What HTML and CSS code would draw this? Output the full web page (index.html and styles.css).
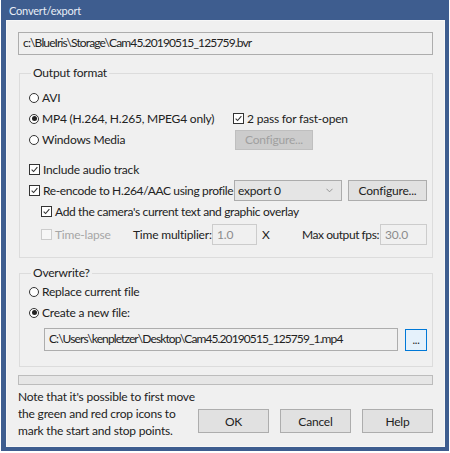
FILE: index.html
```html
<!DOCTYPE html>
<html>
<head>
<meta charset="utf-8">
<link rel="stylesheet" href="styles.css">
</head>
<body>
<div class="frame">
  <div class="titlebar">Convert/export</div>
  <div class="client">
    <div class="pathbox">c:\BlueIris\Storage\Cam45.20190515_125759.bvr</div>

    <fieldset class="group group-output">
      <legend>Output format</legend>
      <div class="row">
        <span class="radio"></span><span class="lbl">AVI</span>
      </div>
      <div class="row">
        <div class="left"><span class="radio on"></span><span class="lbl">MP4 (H.264, H.265, MPEG4 only)</span></div>
        <span class="check on"><svg viewBox="0 0 11 11"><polyline points="2,5.6 4.4,8 9,2.6"/></svg></span><span class="lbl">2 pass for fast-open</span>
      </div>
      <div class="row">
        <div class="left"><span class="radio"></span><span class="lbl">Windows Media</span></div>
        <button class="btn btn-disabled btn-cfg1">Configure...</button>
      </div>
      <div class="row row-gap">
        <span class="check on"><svg viewBox="0 0 11 11"><polyline points="2,5.6 4.4,8 9,2.6"/></svg></span><span class="lbl">Include audio track</span>
      </div>
      <div class="row">
        <div class="left"><span class="check on"><svg viewBox="0 0 11 11"><polyline points="2,5.6 4.4,8 9,2.6"/></svg></span><span class="lbl tight">Re-encode to H.264/AAC using profile</span></div>
        <div class="combo"><span>export 0</span><svg class="chev" viewBox="0 0 8 5"><polyline points="0.5,0.5 4,4 7.5,0.5"/></svg></div>
        <button class="btn btn-cfg2">Configure...</button>
      </div>
      <div class="row indent">
        <span class="check on"><svg viewBox="0 0 11 11"><polyline points="2,5.6 4.4,8 9,2.6"/></svg></span><span class="lbl tight">Add the camera's current text and graphic overlay</span>
      </div>
      <div class="row row-tl indent">
        <div class="tl-check"><span class="check dis"></span><span class="lbl gray">Time-lapse</span></div>
        <span class="tl-label">Time multiplier:</span>
        <div class="field field-mult">1.0</div>
        <span class="tl-x">X</span>
        <span class="tl-label2">Max output fps:</span>
        <div class="field field-fps">30.0</div>
      </div>
    </fieldset>

    <fieldset class="group group-over">
      <legend>Overwrite?</legend>
      <div class="row">
        <span class="radio"></span><span class="lbl">Replace current file</span>
      </div>
      <div class="row">
        <span class="radio on"></span><span class="lbl">Create a new file:</span>
      </div>
      <div class="row-file">
        <div class="filebox">C:\Users\kenpletzer\Desktop\Cam45.20190515_125759_1.mp4</div>
        <button class="btn btn-browse">...</button>
      </div>
    </fieldset>

    <div class="progress"></div>

    <div class="bottom">
      <p class="note">Note that it's possible to first move<br>the green and red crop icons to<br>mark the start and stop points.</p>
      <div class="buttons">
        <button class="btn btn-main">OK</button>
        <button class="btn btn-main">Cancel</button>
        <button class="btn btn-main">Help</button>
      </div>
    </div>
  </div>
</div>
</body>
</html>
```

FILE: styles.css
```css
html, body {
  margin: 0;
  padding: 0;
  background: #ffffff;
}
body {
  width: 450px;
  height: 453px;
  overflow: hidden;
  font-family: "Lato", "Noto Sans", sans-serif;
  font-size: 12px;
  letter-spacing: -0.2px;
  color: #222222;
}
.frame {
  box-sizing: border-box;
  width: 448px;
  height: 451px;
  margin-left: 1px;
  background: #3e5d8f;
  padding: 0 4px 4px 5px;
  display: flex;
  flex-direction: column;
}
.titlebar {
  height: 20px;
  line-height: 21px;
  color: #e9eef6;
  font-size: 11px;
  padding-left: 3px;
  flex: none;
}
.client {
  flex: 1;
  background: #f0f0f0;
  padding: 12px 12px 0 12px;
  display: flex;
  flex-direction: column;
  box-shadow: inset 0 0 0 1px #f7f7f7;
}
.pathbox {
  box-sizing: border-box;
  height: 23px;
  border: 1px solid #adadad;
  background: #f0f0f0;
  line-height: 20px;
  padding-left: 4px;
  white-space: nowrap;
  letter-spacing: -0.85px;
}
.group {
  margin: 10px 0 0 1px;
  border: 1px solid #dcdcdc;
  padding: 0 5px 12px 9px;
  min-width: 0;
}
.group legend {
  padding: 0 2px;
  margin-left: 2px;
  line-height: 16px;
  height: 16px;
}
.group-output {
  padding-top: 6px;
}
.group-over {
  margin-top: 7px;
  padding-bottom: 15px;
}
.row {
  display: flex;
  align-items: center;
  height: 21px;
  white-space: nowrap;
}
.row-gap {
  margin-top: 9px;
}
.indent {
  padding-left: 12px;
}
.left {
  width: 204px;
  display: flex;
  align-items: center;
  flex: none;
}
.lbl {
  margin-left: 3px;
}
.tight {
  letter-spacing: -0.35px;
}
.gray {
  color: #a6a6a6;
}
.radio {
  box-sizing: border-box;
  width: 10px;
  height: 10px;
  border: 1px solid #333333;
  border-radius: 50%;
  background: #ffffff;
  flex: none;
  position: relative;
}
.radio.on::after {
  content: "";
  position: absolute;
  left: 1.5px;
  top: 1.5px;
  width: 5px;
  height: 5px;
  border-radius: 50%;
  background: #222222;
}
.check {
  box-sizing: border-box;
  width: 11px;
  height: 11px;
  border: 1px solid #333333;
  background: #ffffff;
  flex: none;
  display: flex;
}
.check svg {
  width: 9px;
  height: 9px;
  fill: none;
  stroke: #333333;
  stroke-width: 1.3;
}
.check.dis {
  border-color: #cccccc;
  background: #f7f7f7;
}
.btn {
  box-sizing: border-box;
  font-family: inherit;
  font-size: 12px;
  letter-spacing: -0.2px;
  color: #222222;
  background: #e1e1e1;
  border: 1px solid #adadad;
  padding: 0;
  margin: 0;
  flex: none;
}
.btn-disabled {
  background: #cccccc;
  border-color: #bfbfbf;
  color: #a0a0a0;
}
.btn-cfg1 {
  width: 78px;
  height: 20px;
  margin-left: 2px;
}
.combo {
  box-sizing: border-box;
  width: 108px;
  height: 21px;
  margin-left: 1px;
  border: 1px solid #acacac;
  background: #e5e5e5;
  display: flex;
  align-items: center;
  justify-content: space-between;
  padding: 0 8px 0 3px;
  flex: none;
}
.chev {
  width: 7px;
  height: 5px;
  fill: none;
  stroke: #8a8a8a;
  stroke-width: 1;
}
.btn-cfg2 {
  width: 79px;
  height: 21px;
  margin-left: 6px;
}
.row-tl {
  height: 22px;
  margin-top: 1px;
}
.tl-check {
  width: 92px;
  display: flex;
  align-items: center;
  flex: none;
}
.tl-label {
  width: 79px;
  flex: none;
}
.field {
  box-sizing: border-box;
  height: 21px;
  border: 1px solid #cccccc;
  background: #f0f0f0;
  color: #8c8c8c;
  line-height: 19px;
  padding-left: 4px;
  flex: none;
}
.field-mult {
  width: 45px;
}
.tl-x {
  width: 45px;
  padding-left: 5px;
  box-sizing: border-box;
  flex: none;
}
.tl-label2 {
  width: 78px;
  flex: none;
  letter-spacing: -0.45px;
}
.field-fps {
  width: 47px;
}
.row-file {
  display: flex;
  align-items: center;
  margin-top: 5px;
  padding-left: 15px;
}
.filebox {
  box-sizing: border-box;
  width: 354px;
  height: 23px;
  border: 1px solid #adadad;
  background: #f0f0f0;
  line-height: 20px;
  padding-left: 4px;
  white-space: nowrap;
  letter-spacing: -0.9px;
}
.btn-browse {
  width: 22px;
  height: 22px;
  margin-left: 7px;
  border: 1px solid #0078d7;
  background: #e5f1fb;
  line-height: 14px;
  font-size: 11px;
}
.progress {
  box-sizing: border-box;
  height: 10px;
  margin-top: 8px;
  border: 1px solid #bcbcbc;
  background: #e6e6e6;
}
.bottom {
  display: flex;
  justify-content: space-between;
  margin-top: 3px;
}
.note {
  margin: 0;
  line-height: 17px;
  white-space: nowrap;
}
.buttons {
  display: flex;
  gap: 11px;
  margin-top: 21px;
}
.btn-main {
  width: 71px;
  height: 24px;
}
```
